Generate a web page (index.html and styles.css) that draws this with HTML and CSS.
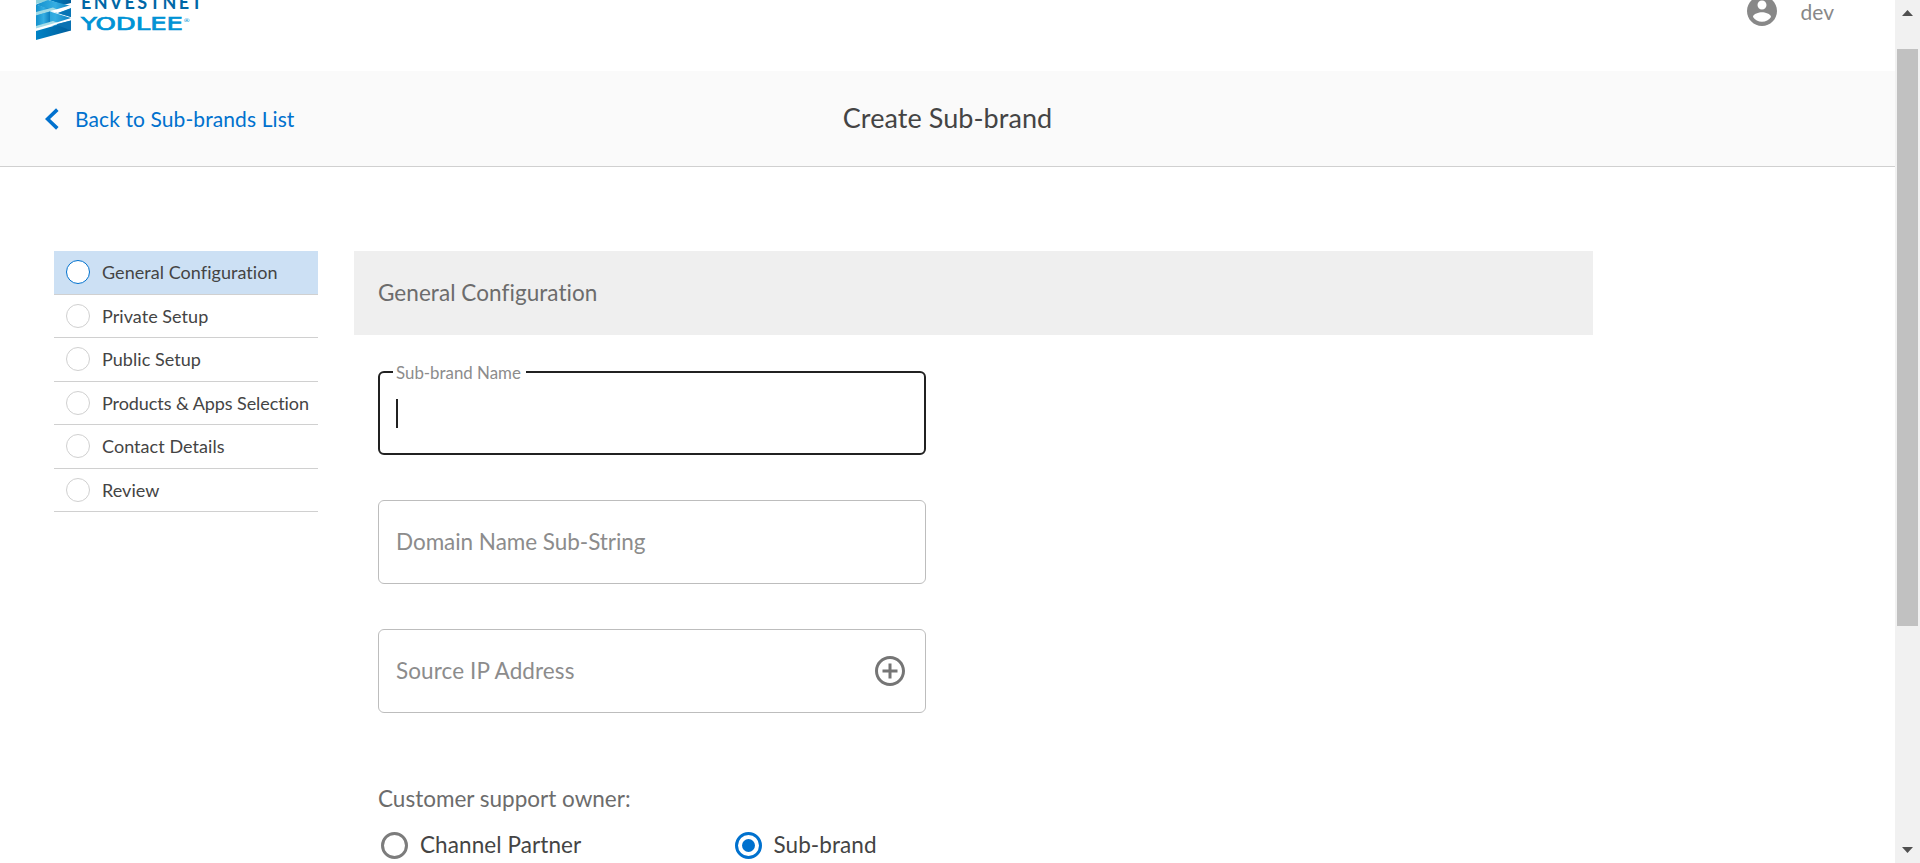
FILE: index.html
```
<!DOCTYPE html>
<html lang="en">
<head>
<meta charset="utf-8">
<title>Create Sub-brand</title>
<link rel="stylesheet" href="styles.css">
</head>
<body>
<div class="page">
  <header class="topbar">
    <div class="brand">
      <svg class="brand-mark" width="35" height="40" viewBox="0 0 35 40">
        <defs>
          <linearGradient id="deep"><stop offset="0" stop-color="#0083c6"/><stop offset="1" stop-color="#005d9b"/></linearGradient>
          <linearGradient id="sky"><stop offset="0" stop-color="#1290cd"/><stop offset=".55" stop-color="#35aee2"/><stop offset="1" stop-color="#0a7dbd"/></linearGradient>
        </defs>
        <path fill="#8fd2dc" d="M0 0H14L0 4Z"/>
        <path fill="url(#deep)" d="M13 0H35V3L27 5Z"/>
        <path fill="url(#sky)" d="M0 4.500L12 0L35 6V17L21 13Z"/>
        <path fill="url(#sky)" d="M0 4.500L14 9L0 13Z"/>
        <path fill="#9fd9e4" d="M0 12L17 7.500L22 10L0 15.500Z"/>
        <path fill="#fff" d="M14 11L20 9.500L35 5V8L22 13Z"/>
        <path fill="#0875b5" d="M22 13L35 8.500V17Z"/>
        <path fill="url(#sky)" d="M0 15.500L14 11.500L35 18V30.500L0 21Z"/>
        <path fill="url(#sky)" d="M0 15.500L14 11.500V23L0 26.500Z"/>
        <path fill="#a5dce8" d="M0 26L17 21L22 23L0 29Z"/>
        <path fill="#fff" d="M0 28.500L19 23L35 18V20.500L22 24L0 30.500Z"/>
        <path fill="#0a72b2" d="M21 24L35 20.500V30.500L22 27Z"/>
        <path fill="url(#deep)" d="M0 31L21 25L35 30.500L0 40Z"/>
      </svg>
      <div class="brand-text">
        <span class="brand-top">ENVESTNET</span>
        <span class="brand-bottom">YODLEE<sup class="brand-reg">®</sup></span>
      </div>
    </div>
    <div class="user">
      <svg class="avatar" width="36" height="36" viewBox="0 0 24 24"><path fill="#888" d="M12 2C6.480 2 2 6.480 2 12s4.480 10 10 10 10-4.480 10-10S17.520 2 12 2zm0 3c1.660 0 3 1.340 3 3s-1.340 3-3 3-3-1.340-3-3 1.340-3 3-3zm0 14.200c-2.500 0-4.710-1.280-6-3.220.030-1.990 4-3.080 6-3.080 1.990 0 5.970 1.090 6 3.080-1.290 1.940-3.500 3.220-6 3.220z"/></svg>
      <span class="user-name">dev</span>
    </div>
  </header>
  <div class="titlebar">
    <a class="back">
      <svg width="14" height="22" viewBox="0 0 14 22"><path d="M12.300 1.600L2.500 11L12.300 20.400" fill="none" stroke="#0071ce" stroke-width="3.600"/></svg>
      <span class="back-label">Back to Sub-brands List</span>
    </a>
    <h1 class="title">Create Sub-brand</h1>
  </div>
  <div class="content">
    <nav class="steps">
      <div class="step active"><i class="dot"></i><span>General Configuration</span></div>
      <div class="step"><i class="dot"></i><span>Private Setup</span></div>
      <div class="step"><i class="dot"></i><span>Public Setup</span></div>
      <div class="step long"><i class="dot"></i><span>Products &amp; Apps Selection</span></div>
      <div class="step"><i class="dot"></i><span>Contact Details</span></div>
      <div class="step"><i class="dot"></i><span>Review</span></div>
    </nav>
    <main class="panel">
      <h2 class="panel-title"><span>General Configuration</span></h2>
      <div class="form">
        <div class="field focused">
          <span class="float-label">Sub-brand Name</span>
          <i class="caret"></i>
        </div>
        <div class="field"><span class="placeholder domain">Domain Name Sub-String</span></div>
        <div class="field"><span class="placeholder source">Source IP Address</span>
          <svg class="add" width="36" height="36" viewBox="0 0 24 24"><path fill="#757575" d="M13 7h-2v4H7v2h4v4h2v-4h4v-2h-4V7zm-1-5C6.480 2 2 6.480 2 12s4.480 10 10 10 10-4.480 10-10S17.520 2 12 2zm0 18c-4.410 0-8-3.590-8-8s3.590-8 8-8 8 3.590 8 8-3.590 8-8 8z"/></svg>
        </div>
        <div class="owner"><span>Customer support owner:</span></div>
        <div class="radios">
          <label class="radio"><i class="ring"></i><span>Channel Partner</span></label>
          <label class="radio"><i class="ring on"></i><span>Sub-brand</span></label>
        </div>
      </div>
    </main>
  </div>
</div>
<div class="scrollbar">
  <svg width="11" height="6" viewBox="0 0 11 6"><path d="M0 6L5.500 0L11 6Z" fill="#505050"/></svg>
  <div class="track"><div class="thumb"></div></div>
  <svg width="11" height="6" viewBox="0 0 11 6"><path d="M0 0H11L5.500 6Z" fill="#505050"/></svg>
</div>
</body>
</html>
```
FILE: styles.css
```
* { box-sizing: border-box; }
body {
  margin: 0;
  height: 863px;
  overflow: hidden;
  display: flex;
  background: #fff;
  color: #444;
  font-family: Lato, sans-serif;
  font-variant-ligatures: none;
}
.page { width: 1895px; height: 863px; overflow: hidden; }
.topbar {
  height: 71px;
  display: flex;
  justify-content: space-between;
  align-items: flex-start;
  padding: 0 60px 0 36px;
}
.brand { display: flex; gap: 10px; }
.brand-mark { display: block; }
.brand-text { display: flex; flex-direction: column; margin-top: -8px; }
.brand-top {
  height: 20px;
  line-height: 20px;
  font-size: 18px;
  font-weight: 700;
  letter-spacing: 2.3px;
  color: #0067a6;
}
.brand-bottom {
  width: 80px;
  white-space: nowrap;
  font: 400 17.500px/24px "DejaVu Sans", sans-serif;
  -webkit-text-stroke: 0.7px #0093d5;
  color: #0093d5;
  transform: scaleX(1.48);
  transform-origin: 0 0;
}
.brand-reg { font-size: 5px; line-height: 1; vertical-align: 8px; -webkit-text-stroke: 0; }
.user { display: flex; align-items: center; height: 36px; margin-top: -7px; gap: 21px; margin-right: 1px; }
.user-name { font-size: 21px; line-height: 26px; padding-top: 1px; color: #888; }
.titlebar {
  height: 96px;
  background: #fafafa;
  border-bottom: 1px solid #d0d0d0;
  display: grid;
  grid-template-columns: 1fr auto 1fr;
  align-items: center;
  padding: 0 45px;
}
.back { display: flex; align-items: center; gap: 16px; color: #0071ce; font-size: 21px; letter-spacing: 0.1px; }
.title { margin: -2px 0 0; font-size: 27px; font-weight: 400; line-height: 32px; letter-spacing: 0.06px; }
.content { display: flex; gap: 36px; padding: 84px 0 0 54px; }
.steps { width: 264px; }
.step {
  height: 43.5px;
  border-bottom: 1px solid #d0d0d0;
  display: flex;
  align-items: center;
  gap: 12px;
  padding-left: 12px;
  font-size: 18px;
  line-height: 24px;
  letter-spacing: 0.05px;
  white-space: nowrap;
}
.step.long { letter-spacing: -0.07px; }
.step.active { background: #cce0f4; }
.dot { width: 24px; height: 24px; border: 1px solid #d0d0d0; border-radius: 50%; background: #fff; }
.active .dot { border-color: #0071ce; }
.panel { width: 1239px; }
.panel-title {
  margin: 0;
  height: 84px;
  padding: 0 0 2px 24px;
  display: flex;
  align-items: center;
  background: #efefef;
  color: #6c6c6c;
  font-size: 22.5px;
  font-weight: 400;
  letter-spacing: 0.06px;
}
.form { width: 572px; padding: 36px 0 0 24px; }
.field {
  height: 84px;
  margin-bottom: 45px;
  padding: 0 17px;
  border: 1px solid #bdbdbd;
  border-radius: 6px;
  display: flex;
  align-items: center;
  justify-content: space-between;
  color: #8c8c8c;
  font-size: 22.5px;
}
.placeholder { padding-bottom: 2px; }
.domain { letter-spacing: -0.04px; }
.source { letter-spacing: 0.1px; }
.focused { position: relative; border: 2px solid #212121; padding-left: 16px; }
.float-label {
  position: absolute;
  left: 13px;
  top: -12px;
  width: 133px;
  padding-left: 3px;
  background: #fff;
  font-size: 16.875px;
  line-height: 24px;
  white-space: nowrap;
}
.caret { width: 2px; height: 29px; background: #212121; }
.owner { height: 30px; line-height: 30px; margin-top: 71px; font-size: 22.5px; color: #6c6c6c; }
.radios { display: flex; margin-top: 16px; }
.radio { width: 353.500px; flex: none; display: flex; align-items: center; gap: 12px; padding-left: 3px; font-size: 22.5px; line-height: 30px; letter-spacing: 0.08px; }
.radio span { padding-bottom: 1px; }
.ring { width: 27px; height: 27px; border: 3px solid #7c7c7c; border-radius: 50%; display: flex; align-items: center; justify-content: center; }
.ring.on { border-color: #0071ce; }
.ring.on::after { content: ""; width: 13px; height: 13px; border-radius: 50%; background: #0071ce; }
.scrollbar {
  width: 25px;
  height: 863px;
  background: #f1f1f1;
  display: flex;
  flex-direction: column;
  align-items: center;
  padding: 10px 0;
}
.track { flex: 1; padding-top: 33px; }
.thumb { width: 21px; height: 577px; background: #c1c1c1; }
```
